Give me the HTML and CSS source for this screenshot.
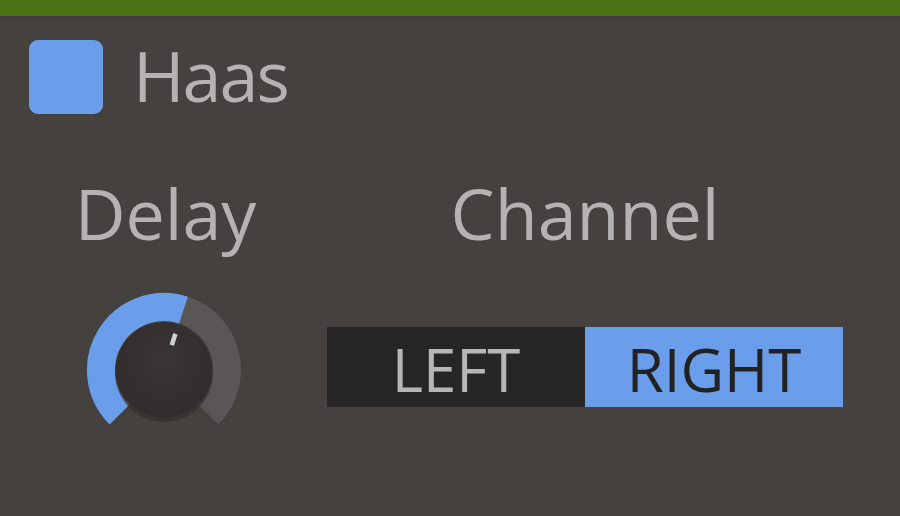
FILE: index.html
```html
<!DOCTYPE html>
<html>
<head>
<meta charset="utf-8">
<link rel="stylesheet" href="styles.css">
</head>
<body>
<div class="topbar"></div>
<div class="panel">
  <div class="header">
    <div class="checkbox"></div>
    <div class="title">Haas</div>
  </div>
  <div class="controls">
    <div class="col delay">
      <div class="label">Delay</div>
      <div class="knob">
        <svg width="160" height="160" viewBox="0 0 160 160">
          <defs>
            <radialGradient id="kg" cx="50%" cy="40%" r="60%">
              <stop offset="0%" stop-color="#393635"/>
              <stop offset="100%" stop-color="#2f2c2b"/>
            </radialGradient>
          </defs>
          <path d="M35.45 124.55 A63 63 0 1 1 124.55 124.55" fill="none" stroke="#595655" stroke-width="28"/>
          <path d="M35.45 124.55 A63 63 0 0 1 99.47 20.08" fill="none" stroke="#6a9eea" stroke-width="28"/>
          <circle cx="80" cy="83" r="49" fill="#2f2c2b" opacity="0.6"/>
          <circle cx="80" cy="80" r="48" fill="url(#kg)"/>
          <rect x="78" y="42" width="4.5" height="12" fill="#cfcfcf" transform="rotate(17 80 80)"/>
        </svg>
      </div>
    </div>
    <div class="col channel">
      <div class="label">Channel</div>
      <div class="toggle">
        <div class="seg off">LEFT</div>
        <div class="seg on">RIGHT</div>
      </div>
    </div>
  </div>
</div>
</body>
</html>
```
FILE: styles.css
```css
html, body {
  margin: 0;
  padding: 0;
}
body {
  width: 900px;
  height: 516px;
  overflow: hidden;
  background: #45413e;
  font-family: "Open Sans", "DejaVu Sans", sans-serif;
  color: #b5b3b1;
}
.topbar {
  height: 16px;
  background: #4a7414;
  border-bottom: 2px solid #3e3d42;
}
.panel {
  padding-top: 22px;
}
.header {
  display: flex;
  align-items: flex-start;
  gap: 30px;
  height: 74px;
  padding-left: 29px;
}
.checkbox {
  width: 74px;
  height: 74px;
  border-radius: 9px;
  background: #6a9eea;
}
.title {
  font-size: 70px;
  line-height: 74px;
  letter-spacing: -2px;
  margin-top: -2px;
}
.controls {
  display: flex;
  margin-top: 62px;
}
.col {
  display: flex;
  flex-direction: column;
  align-items: center;
}
.delay {
  width: 331px;
}
.channel {
  width: 516px;
  margin-left: -4px;
}
.label {
  font-size: 70px;
  line-height: 74px;
}
.knob {
  margin-top: 40px;
  margin-right: 4px;
  width: 160px;
  height: 160px;
}
.knob svg {
  display: block;
}
.toggle {
  display: flex;
  margin-top: 77px;
  width: 516px;
  height: 80px;
}
.seg {
  flex: 1;
  display: flex;
  align-items: center;
  justify-content: center;
  font-size: 60px;
  line-height: 1;
  padding-top: 4px;
  box-sizing: border-box;
}
.seg.off {
  background: #282625;
  color: #b7b6b5;
}
.seg.on {
  background: #6a9eea;
  color: #232222;
}
```
